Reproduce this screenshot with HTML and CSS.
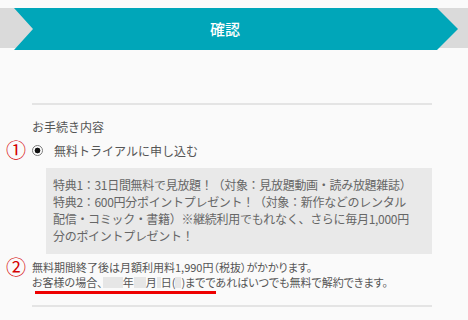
FILE: index.html
```html
<!doctype html>
<html lang="ja">
  <head>
    <meta charset="utf-8">
    <meta name="viewport" content="width=device-width, initial-scale=1">
    <link rel="stylesheet" href="styles.css">
    <title>確認</title>
  </head>
  <body>
    <div class="step-bar">
      <div class="step-current">確認</div>
    </div>
    <div class="content">
      <hr class="rule">
      <p class="section-label">お手続き内容</p>
      <div class="option">
        <span class="anno anno-1">①</span>
        <span class="radio"></span>
        <span class="option-text">無料トライアルに申し込む</span>
      </div>
      <div class="benefits">
        特典1：31日間無料で見放題！（対象：見放題動画・読み放題雑誌）<br>
        特典2：600円分ポイントプレゼント！（対象：新作などのレンタル<br>
        配信・コミック・書籍）※継続利用でもれなく、さらに毎月1,000円<br>
        分のポイントプレゼント！
      </div>
      <div class="notes">
        <span class="anno anno-2">②</span>
        <p>無料期間終了後は月額利用料1,990円（税抜）がかかります。</p>
        <p>お客様の場合、<span class="blank w20"></span>年<span class="blank w12"></span>月<span class="blank w4"></span>日(<span class="blank w6"></span>)までであればいつでも無料で解約できます。</p>
        <span class="mark-line"></span>
      </div>
      <hr class="rule rule-bottom">
    </div>
  </body>
</html>
```

FILE: styles.css
```css
body {
  margin: 0;
  background: #fafafa;
  font-family: "Noto Sans CJK JP", "Noto Sans", sans-serif;
  color: #555555;
}
.step-bar {
  margin-top: 9px;
  height: 40px;
  background: #dadada;
}
.step-current {
  box-sizing: border-box;
  margin: -1px 0 0 14px;
  width: 444px;
  height: 42px;
  padding-right: 22px;
  background: #00a6b9;
  clip-path: polygon(0 0, 423px 0, 444px 21px, 423px 42px, 0 42px, 19px 21px);
  color: #ffffff;
  font-size: 15px;
  font-weight: 500;
  line-height: 42px;
  text-align: center;
}
.content {
  padding: 0 36px 0 32px;
}
.rule {
  margin: 55px 0 0;
  border: 0;
  border-top: 2px solid #e4e4e4;
}
.rule-bottom {
  margin-top: 15px;
}
.section-label {
  margin: 13px 0 0;
  font-size: 12px;
  line-height: 18px;
}
.option {
  position: relative;
  display: flex;
  align-items: center;
  margin-top: 5px;
  height: 18px;
}
.radio {
  box-sizing: border-box;
  width: 11px;
  height: 11px;
  border: 1px solid #7a7a7a;
  border-radius: 50%;
  background: radial-gradient(circle, #111111 0 2.6px, #ffffff 3.2px);
}
.option-text {
  margin-left: 11px;
  font-size: 12px;
}
.benefits {
  margin: 9px 0 0 14px;
  padding: 8px 7px 10px;
  background: #e9e9e9;
  color: #666666;
  font-size: 12px;
  line-height: 17px;
  letter-spacing: -0.3px;
  white-space: nowrap;
}
.notes {
  position: relative;
  margin-top: 6px;
  font-size: 11px;
  line-height: 15px;
  font-feature-settings: "palt";
}
.notes p {
  margin: 0;
}
.blank {
  display: inline-block;
  height: 11px;
  vertical-align: -1px;
  background: #e6e6e6;
}
.w20 { width: 20px; }
.w12 { width: 12px; }
.w6 { width: 6px; }
.w4 { width: 4px; }
.anno {
  position: absolute;
  left: -26px;
  color: #d40000;
  font-size: 20px;
  line-height: 20px;
}
.anno-1 {
  top: -1px;
}
.anno-2 {
  top: -3px;
}
.mark-line {
  position: absolute;
  left: 3px;
  top: 31px;
  width: 181px;
  height: 3px;
  background: #ee0000;
}
```
